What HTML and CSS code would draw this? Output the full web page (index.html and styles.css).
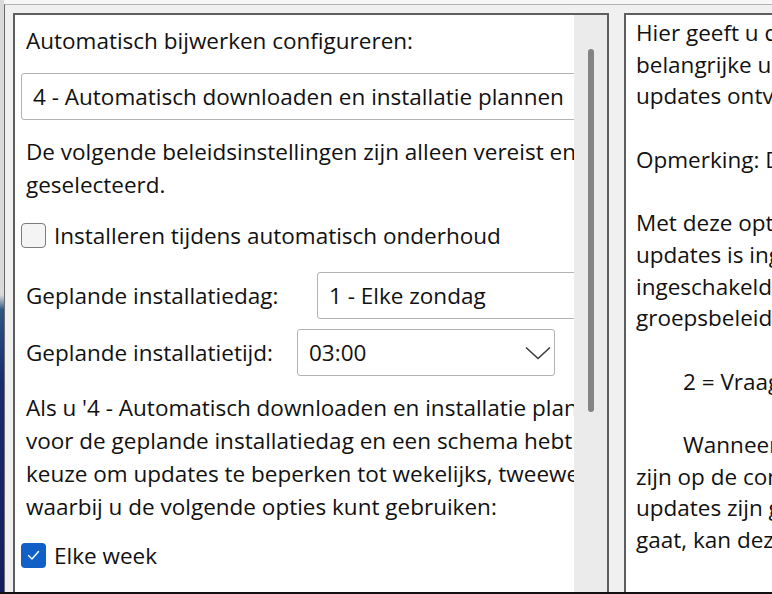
FILE: index.html
```html
<!DOCTYPE html>
<html lang="nl">
<head>
<meta charset="utf-8">
<title>Automatische updates configureren</title>
<link rel="stylesheet" href="styles.css">
</head>
<body>
<div class="screen">
  <div class="backdrop"></div>
  <div class="window">
    <div class="pane-left">
      <div class="viewport">
        <div class="content">
          <div class="text heading">Automatisch bijwerken configureren:</div>
          <div class="select select-wide">4 - Automatisch downloaden en installatie plannen</div>
          <p class="text para para-1">De volgende beleidsinstellingen zijn alleen vereist en<br>geselecteerd.</p>
          <div class="check check-1">
            <span class="box"></span>
            <span class="check-label">Installeren tijdens automatisch onderhoud</span>
          </div>
          <div class="field field-day">
            <span class="text label label-day">Geplande installatiedag:</span>
            <div class="select select-day">1 - Elke zondag</div>
          </div>
          <div class="field field-time">
            <span class="text label label-time">Geplande installatietijd:</span>
            <div class="select select-time">
              <span>03:00</span>
              <svg class="chevron" width="26" height="14" viewBox="0 0 26 14"><polyline points="1,1.5 13,12.5 25,1.5" fill="none" stroke="#3c3c3c" stroke-width="1.6"/></svg>
            </div>
          </div>
          <p class="text para para-2">Als u '4 - Automatisch downloaden en installatie plannen'<br>voor de geplande installatiedag en een schema hebt<br>keuze om updates te beperken tot wekelijks, tweewekelijks<br>waarbij u de volgende opties kunt gebruiken:</p>
          <div class="check check-2">
            <span class="box box-checked">
              <svg width="25" height="25" viewBox="0 0 25 25"><polyline points="7.5,12.5 11,16 17.5,8.5" fill="none" stroke="#ffffff" stroke-width="1.4" stroke-linecap="round" stroke-linejoin="round"/></svg>
            </span>
            <span class="check-label">Elke week</span>
          </div>
        </div>
      </div>
      <div class="scrollbar"><div class="thumb"></div></div>
    </div>
    <div class="pane-right">
      <div class="line">Hier geeft u de</div>
      <div class="line">belangrijke updates</div>
      <div class="line">updates ontvangt</div>
      <div class="line blank">&nbsp;</div>
      <div class="line">Opmerking: Deze</div>
      <div class="line blank">&nbsp;</div>
      <div class="line">Met deze optie</div>
      <div class="line">updates is ingeschakeld</div>
      <div class="line">ingeschakeld</div>
      <div class="line">groepsbeleid</div>
      <div class="line blank">&nbsp;</div>
      <div class="line indent">2 = Vraag</div>
      <div class="line blank">&nbsp;</div>
      <div class="line indent">Wanneer</div>
      <div class="line">zijn op de computer</div>
      <div class="line">updates zijn gereed</div>
      <div class="line">gaat, kan deze</div>
    </div>
  </div>
</div>
<div class="taskbar-edge"></div>
</body>
</html>
```
FILE: styles.css
```css
* { box-sizing: border-box; }

html, body {
  margin: 0;
  padding: 0;
}

body {
  width: 772px;
  height: 594px;
  overflow: hidden;
  background: #111111;
  font-family: "Open Sans", "Noto Sans", sans-serif;
  font-size: 22.5px;
  color: #111111;
}

.screen {
  height: 592px;
  display: flex;
  overflow: hidden;
  background: #f7f7f7;
}

.backdrop {
  width: 4px;
  flex: none;
  background: linear-gradient(#dadada 0, #dadada 295px, #2d5580 310px, #1a2a72 380px, #141d5e 100%);
}

.window {
  flex: 1;
  min-width: 0;
  margin-top: 4px;
  border-left: 1px solid #6a6a6a;
  border-top: 1px solid #b4b4b4;
  background: #f0f0f0;
  padding: 8px 0 0 8px;
  display: flex;
  gap: 15px;
}

/* left pane */
.pane-left {
  width: 596px;
  height: 640px;
  flex: none;
  border: 2px solid #5e5e5e;
  display: flex;
}

.viewport {
  width: 559px;
  flex: none;
  background: #ffffff;
  overflow: hidden;
}

.content {
  width: 640px;
  padding: 9px 0 0 6px;
}

.text {
  padding-left: 5px;
  line-height: 33px;
  white-space: nowrap;
}

.heading { height: 33px; }

.para { margin: 0; }
.para-1 { margin-top: 15px; }
.para-2 { margin-top: 15px; }

.select {
  height: 47px;
  border: 1px solid #b3b3b3;
  border-radius: 3px;
  background: #ffffff;
  display: flex;
  align-items: center;
  padding-left: 11px;
  white-space: nowrap;
  line-height: 33px;
}

.select-wide {
  width: 600px;
  margin-top: 16px;
}

.check {
  display: flex;
  align-items: center;
  height: 25px;
  gap: 8px;
  white-space: nowrap;
}
.check-1 { margin-top: 22px; }
.check-2 { margin-top: 20px; }

.check-label { line-height: 33px; }

.box {
  width: 25px;
  height: 25px;
  flex: none;
  border: 1.5px solid #7c7c7c;
  border-radius: 4px;
  background: #f4f4f4;
}

.box-checked {
  border: none;
  background: #1160c7;
  display: flex;
}

.field {
  display: flex;
  align-items: center;
  height: 47px;
}
.field-day { margin-top: 24px; }
.field-time { margin-top: 10px; }

.label { flex: none; }
.label-day { width: 296px; }
.label-time { width: 276px; }

.select-day { width: 300px; }

.select-time {
  width: 258px;
  justify-content: space-between;
  padding-right: 3px;
}

.chevron { display: block; }

.scrollbar {
  flex: 1;
  background: #ebebeb;
  padding: 34px 0 0 14px;
}

.thumb {
  width: 6px;
  height: 363px;
  border-radius: 3px;
  background: #838383;
}

/* right pane */
.pane-right {
  flex: 1;
  min-width: 0;
  height: 640px;
  border-left: 2px solid #5e5e5e;
  border-top: 2px solid #5e5e5e;
  background: #ffffff;
  padding: 2px 0 0 10px;
  line-height: 31.7px;
  white-space: nowrap;
  overflow: hidden;
}

.line { height: 31.7px; }
.indent { padding-left: 47px; }

.taskbar-edge {
  height: 2px;
  background: #111111;
}
```
